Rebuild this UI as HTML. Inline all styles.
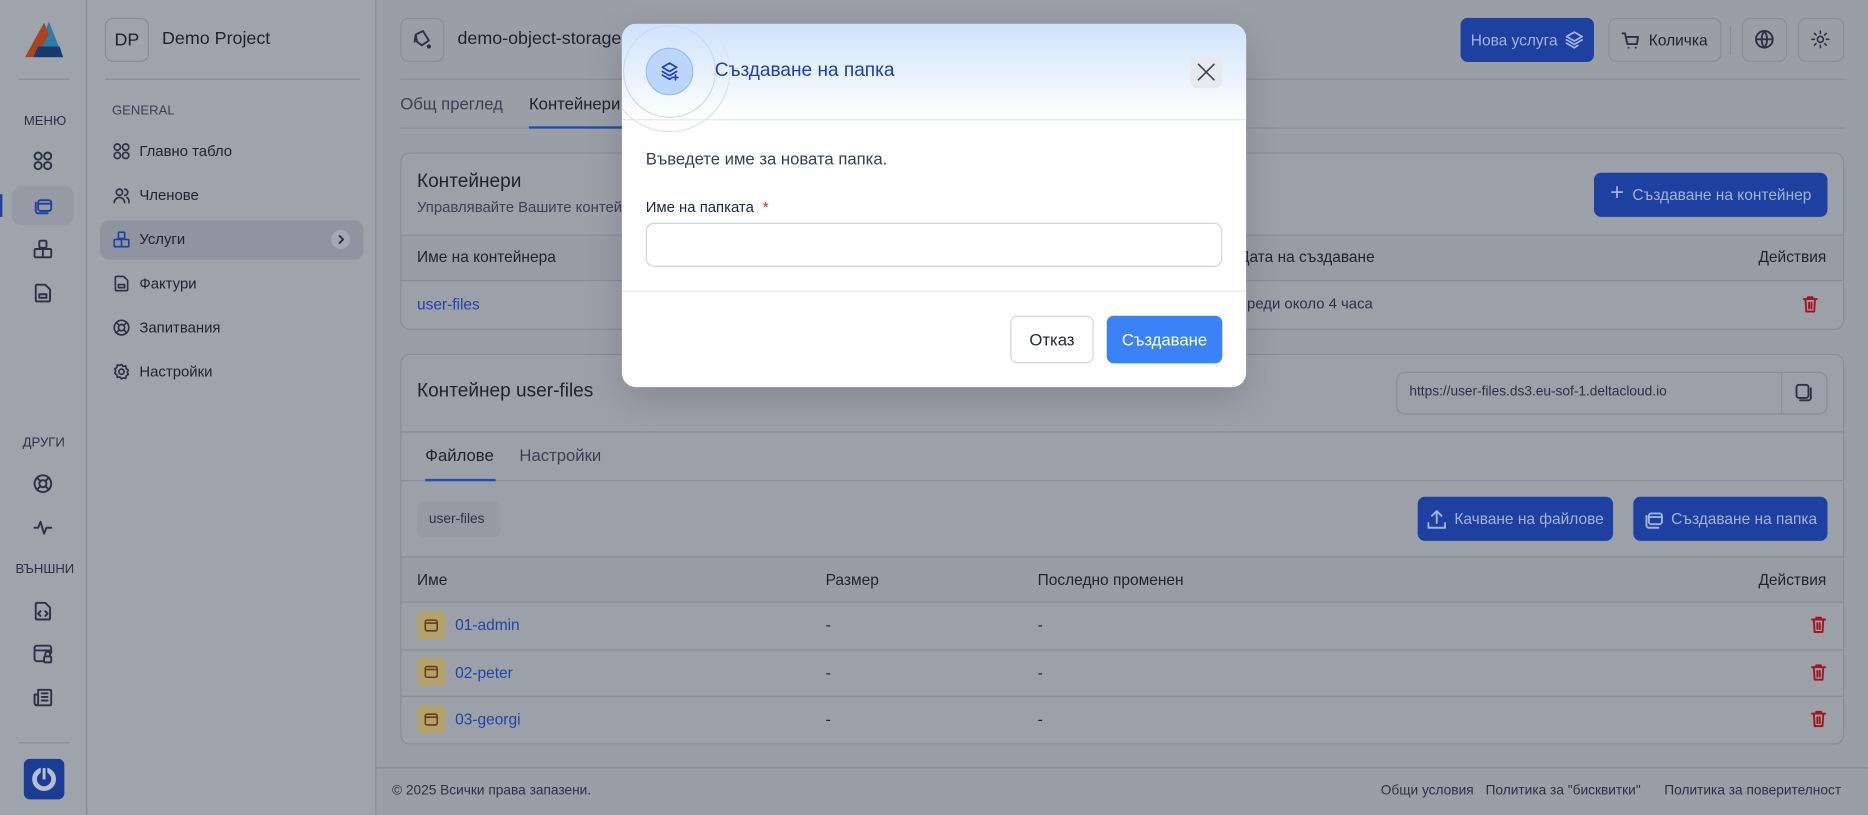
<!DOCTYPE html>
<html><head><meta charset="utf-8">
<style>
*{box-sizing:border-box;margin:0;padding:0}
html,body{width:1868px;height:815px;overflow:hidden;background:#9a9ea7}
#s{position:absolute;left:0;top:0;width:1568px;height:684px;transform:scale(1.19133);transform-origin:0 0;font-family:"Liberation Sans",sans-serif;color:#1d2330;background:#9a9ea7}
.a{position:absolute}
.t{position:absolute;white-space:nowrap;line-height:1}
.ic{position:absolute;fill:none;stroke:#2a3344;stroke-width:1.6;stroke-linecap:round;stroke-linejoin:round}
.card{position:absolute;border:1px solid #878d99;border-radius:8px;background:#9ca0a9}
.hl{position:absolute;height:1px;background:#878d99}
.btnb{position:absolute;background:#1e40a0;border-radius:6px;color:#a3b3d8;font-size:13px;display:flex;align-items:center;justify-content:center;gap:7px}
.ob{position:absolute;border:1px solid #878d99;border-radius:7px}
.trash{position:absolute;stroke:#a3151f}
</style></head><body><div id="s">
<!-- rail -->
<div class="a" style="left:0;top:0;width:73px;height:684px;background:#9fa3ac;border-right:1px solid #878d99"></div>
<svg class="a" style="left:20px;top:17px" width="34" height="33" viewBox="0 0 34 33"><polygon points="21,1 33,31 10,31" fill="#2a7fa8"/><polygon points="17,2 1,31 10,31 21,12" fill="#a54522"/><polygon points="12,22 30,22 33,31 8,31" fill="#17396b"/></svg>
<div class="hl" style="left:16px;top:66px;width:42px"></div>
<div class="t" style="left:20px;top:97px;font-size:11px;color:#2a3344">МЕНЮ</div>
<svg class="ic" style="left:28px;top:127px" width="16" height="16" viewBox="0 0 16 16"><circle cx="4" cy="4" r="3"/><circle cx="12" cy="4" r="3"/><circle cx="4" cy="12" r="3"/><circle cx="12" cy="12" r="3"/></svg>
<div class="a" style="left:10px;top:156px;width:52px;height:33px;background:#959aa5;border-radius:8px"></div>
<div class="a" style="left:0;top:163px;width:2px;height:19px;background:#1e40a0"></div>
<svg class="ic" style="left:28px;top:164px;stroke:#1e40a0" width="16" height="16" viewBox="0 0 16 16"><rect x="4" y="4" width="11" height="9" rx="2"/><path d="M2 6v7a2 2 0 0 0 2 2h8M4 7h11"/></svg>
<svg class="ic" style="left:28px;top:201px" width="16" height="16" viewBox="0 0 16 16"><rect x="5" y="1" width="6" height="6" rx="1"/><rect x="1" y="8" width="14" height="7" rx="1"/><path d="M8 8v7"/></svg>
<svg class="ic" style="left:29px;top:238px" width="14" height="16" viewBox="0 0 14 16"><path d="M2 1h7l4 4v9a1 1 0 0 1-1 1H2a1 1 0 0 1-1-1V2a1 1 0 0 1 1-1zM4 9h6v3H4z"/></svg>
<div class="t" style="left:19px;top:367px;font-size:11px;color:#2a3344">ДРУГИ</div>
<svg class="ic" style="left:28px;top:398px" width="16" height="16" viewBox="0 0 16 16"><circle cx="8" cy="8" r="7"/><circle cx="8" cy="8" r="3"/><path d="M3 3l3 3M13 3l-3 3M3 13l3-3M13 13l-3-3"/></svg>
<svg class="ic" style="left:28px;top:436px" width="16" height="14" viewBox="0 0 16 14"><path d="M1 7h3l2-5 3 10 2-5h4"/></svg>
<div class="t" style="left:13px;top:473px;font-size:11px;color:#2a3344">ВЪНШНИ</div>
<svg class="ic" style="left:29px;top:505px" width="14" height="16" viewBox="0 0 14 16"><path d="M2 1h7l4 4v9a1 1 0 0 1-1 1H2a1 1 0 0 1-1-1V2a1 1 0 0 1 1-1zM5 8l-2 2 2 2M9 8l2 2-2 2"/></svg>
<svg class="ic" style="left:28px;top:541px" width="16" height="16" viewBox="0 0 16 16"><path d="M8 14H3a2 2 0 0 1-2-2V3a2 2 0 0 1 2-2h10a2 2 0 0 1 2 2v4M1 5h14"/><rect x="9" y="10" width="6" height="5" rx="1"/><path d="M10 10V8a2 2 0 0 1 4 0v2"/></svg>
<svg class="ic" style="left:28px;top:577px" width="16" height="16" viewBox="0 0 16 16"><path d="M4 2h10a1 1 0 0 1 1 1v11a1 1 0 0 1-1 1H3a2 2 0 0 1-2-2V6h3zM4 2v11a2 2 0 0 1-2 2M7 5h5M7 8h5M7 11h5"/></svg>
<div class="hl" style="left:16px;top:623px;width:42px"></div>
<div class="a" style="left:20px;top:637px;width:34px;height:34px;background:#1a3c94;border-radius:5px"></div>
<svg class="a" style="left:25px;top:642px" width="24" height="24" viewBox="0 0 24 24"><circle cx="12" cy="12" r="8" fill="none" stroke="#b8bfcc" stroke-width="4"/><rect x="10" y="2" width="4" height="11" fill="#b8bfcc" stroke="#1a3c94" stroke-width="1.5"/></svg>
<!-- sidebar -->
<div class="a" style="left:74px;top:0;width:242px;height:684px;background:#9fa3ac;border-right:1px solid #878d99"></div>
<div class="ob" style="left:88px;top:15px;width:37px;height:37px;display:flex;align-items:center;justify-content:center;font-size:15px">DP</div>
<div class="t" style="left:136px;top:25px;font-size:15px;color:#1d2330">Demo Project</div>
<div class="hl" style="left:88px;top:66px;width:214px"></div>
<div class="t" style="left:94px;top:88px;font-size:11px;color:#3a4252">GENERAL</div>
<svg class="ic" style="left:95px;top:120px" width="14" height="14" viewBox="0 0 16 16"><circle cx="4" cy="4" r="3"/><circle cx="12" cy="4" r="3"/><circle cx="4" cy="12" r="3"/><circle cx="12" cy="12" r="3"/></svg>
<div class="t" style="left:117px;top:121px;font-size:12.5px">Главно табло</div>
<svg class="ic" style="left:95px;top:157px" width="14" height="14" viewBox="0 0 16 16"><circle cx="6" cy="5" r="3"/><path d="M1 15a5 5 0 0 1 10 0M11 2a3 3 0 0 1 0 6M13 10a4 4 0 0 1 2 5"/></svg>
<div class="t" style="left:117px;top:158px;font-size:12.5px">Членове</div>
<div class="a" style="left:84px;top:185px;width:221px;height:33px;background:#8e94a0;border-radius:8px"></div>
<svg class="ic" style="left:95px;top:194px;stroke:#1e40a0" width="14" height="14" viewBox="0 0 16 16"><rect x="5" y="1" width="6" height="6" rx="1"/><rect x="1" y="8" width="14" height="7" rx="1"/><path d="M8 8v7"/></svg>
<div class="t" style="left:117px;top:195px;font-size:12.5px">Услуги</div>
<div class="a" style="left:278px;top:193px;width:16px;height:16px;border-radius:8px;background:#a3a8b2"></div>
<svg class="ic" style="left:282px;top:197px" width="8" height="8" viewBox="0 0 8 8"><path d="M3 1l3 3-3 3"/></svg>
<svg class="ic" style="left:96px;top:231px" width="12" height="14" viewBox="0 0 14 16"><path d="M2 1h7l4 4v9a1 1 0 0 1-1 1H2a1 1 0 0 1-1-1V2a1 1 0 0 1 1-1zM4 9h6v3H4z"/></svg>
<div class="t" style="left:117px;top:232px;font-size:12.5px">Фактури</div>
<svg class="ic" style="left:95px;top:268px" width="14" height="14" viewBox="0 0 16 16"><circle cx="8" cy="8" r="7"/><circle cx="8" cy="8" r="3"/><path d="M3 3l3 3M13 3l-3 3M3 13l3-3M13 13l-3-3"/></svg>
<div class="t" style="left:117px;top:269px;font-size:12.5px">Запитвания</div>
<svg class="ic" style="left:95px;top:305px" width="14" height="14" viewBox="0 0 16 16"><circle cx="8" cy="8" r="2.5"/><path d="M8 1l1.5 2 2.5-.5.5 2.5 2 1.5-1 2 1 2-2 1.5-.5 2.5-2.5-.5L8 15l-1.5-2-2.5.5-.5-2.5-2-1.5 1-2-1-2 2-1.5.5-2.5 2.5.5z"/></svg>
<div class="t" style="left:117px;top:306px;font-size:12.5px">Настройки</div>
<!-- header -->
<div class="ob" style="left:336px;top:15px;width:37px;height:37px"></div>
<svg class="ic" style="left:345px;top:24px" width="18" height="18" viewBox="0 0 18 18"><path d="M4 5l6-3 5 8-6 4-4-3zM4 5l-1 6M15 14a1 1 0 1 0 .1 0"/></svg>
<div class="t" style="left:384px;top:25px;font-size:15px">demo-object-storage</div>
<div class="btnb" style="left:1226px;top:15px;width:112px;height:37px">Нова услуга <svg class="ic" style="position:static;stroke:#a3b3d8" width="15" height="15" viewBox="0 0 16 16"><path d="M8 1l7 4-7 4-7-4zM1 8l7 4 7-4M1 11l7 4 3-2"/></svg></div>
<div class="ob" style="left:1350px;top:15px;width:95px;height:37px"></div>
<svg class="ic" style="left:1361px;top:26px" width="16" height="16" viewBox="0 0 16 16"><path d="M1 2h2l2 9h8l1-6H5M6 14h.1M12 14h.1"/></svg>
<div class="t" style="left:1384px;top:27px;font-size:13px">Количка</div>
<div class="a" style="left:1452px;top:22px;width:1px;height:24px;background:#878d99"></div>
<div class="ob" style="left:1462px;top:15px;width:38px;height:37px"></div>
<svg class="ic" style="left:1473px;top:25px" width="16" height="16" viewBox="0 0 16 16"><circle cx="8" cy="8" r="7"/><path d="M1 8h14M8 1c-3 4-3 10 0 14M8 1c3 4 3 10 0 14"/></svg>
<div class="ob" style="left:1509px;top:15px;width:39px;height:37px"></div>
<svg class="ic" style="left:1520px;top:25px;stroke-width:1.3" width="16" height="16" viewBox="0 0 16 16"><circle cx="8" cy="8" r="2.5"/><path d="M8 1v2M8 13v2M1 8h2M13 8h2M3 3l1.4 1.4M11.6 11.6L13 13M3 13l1.4-1.4M11.6 4.4L13 3"/></svg>
<div class="hl" style="left:336px;top:66px;width:1212px"></div>
<div class="t" style="left:336px;top:80px;font-size:14px;color:#3a4252">Общ преглед</div>
<div class="t" style="left:444px;top:80px;font-size:14px">Контейнери</div>
<div class="hl" style="left:336px;top:107px;width:1212px"></div>
<div class="a" style="left:444px;top:106px;width:90px;height:2px;background:#1e50b0"></div>
<!-- card1 -->
<div class="card" style="left:336px;top:128px;width:1212px;height:149px"></div>
<div class="t" style="left:350px;top:145px;font-size:16px">Контейнери</div>
<div class="t" style="left:350px;top:168px;font-size:12.5px;color:#3a4252">Управлявайте Вашите контейнери</div>
<div class="btnb" style="left:1338px;top:145px;width:196px;height:37px"><span style="font-size:20px;font-weight:300;margin-top:-2px">+</span>Създаване на контейнер</div>
<div class="hl" style="left:337px;top:197px;width:1210px"></div>
<div class="a" style="left:337px;top:198px;width:1210px;height:37px;background:#989ca6"></div>
<div class="t" style="left:350px;top:209px;font-size:13px">Име на контейнера</div>
<div class="t" style="left:1040px;top:209px;font-size:13px">Дата на създаване</div>
<div class="t" style="right:35px;top:209px;font-size:13px">Действия</div>
<div class="hl" style="left:337px;top:235px;width:1210px"></div>
<div class="t" style="left:350px;top:249px;font-size:13px;color:#1e45a8">user-files</div>
<div class="t" style="left:1040px;top:249px;font-size:12.5px;color:#2a3344">преди около 4 часа</div>
<svg class="ic trash" style="left:1513px;top:248px" width="13" height="15" viewBox="0 0 13 15"><path d="M1 3h11M4.5 3V1.5h4V3M2.5 3l.7 10.5h6.6L10.5 3M5.5 6v5M7.5 6v5"/></svg>
<!-- card2 -->
<div class="card" style="left:336px;top:297px;width:1212px;height:328px"></div>
<div class="t" style="left:350px;top:321px;font-size:16px">Контейнер user-files</div>
<div class="ob" style="left:1172px;top:312px;width:362px;height:36px"></div>
<div class="a" style="left:1495px;top:313px;width:1px;height:34px;background:#878d99"></div>
<div class="t" style="left:1183px;top:324px;font-size:11.5px;color:#2a3344">https://user-files.ds3.eu-sof-1.deltacloud.io</div>
<svg class="ic" style="left:1507px;top:322px" width="14" height="15" viewBox="0 0 14 15"><rect x="1" y="1" width="10" height="11" rx="2"/><path d="M13 4v8a2 2 0 0 1-2 2H4"/></svg>
<div class="hl" style="left:337px;top:362px;width:1210px"></div>
<div class="t" style="left:357px;top:375px;font-size:14px">Файлове</div>
<div class="t" style="left:436px;top:375px;font-size:14px;color:#3a4252">Настройки</div>
<div class="hl" style="left:337px;top:403px;width:1210px"></div>
<div class="a" style="left:357px;top:402px;width:59px;height:2px;background:#1e50b0"></div>
<div class="a" style="left:350px;top:421px;width:70px;height:30px;border-radius:6px;background:#959aa4"></div>
<div class="t" style="left:360px;top:431px;font-size:11.5px;color:#2a3344">user-files</div>
<div class="btnb" style="left:1190px;top:417px;width:164px;height:37px"><svg class="ic" style="position:static;stroke:#a3b3d8" width="16" height="16" viewBox="0 0 16 16"><path d="M8 11V1M4 5l4-4 4 4M1 11v4h14v-4"/></svg>Качване на файлове</div>
<div class="btnb" style="left:1371px;top:417px;width:163px;height:37px"><svg class="ic" style="position:static;stroke:#a3b3d8" width="16" height="16" viewBox="0 0 16 16"><rect x="4" y="3" width="11" height="9" rx="2"/><path d="M2 5v8a2 2 0 0 0 2 2h8M4 6h11"/></svg>Създаване на папка</div>
<div class="hl" style="left:337px;top:467px;width:1210px"></div>
<div class="a" style="left:337px;top:468px;width:1210px;height:37px;background:#989ca6"></div>
<div class="t" style="left:350px;top:480px;font-size:13px">Име</div>
<div class="t" style="left:693px;top:480px;font-size:13px">Размер</div>
<div class="t" style="left:871px;top:480px;font-size:13px">Последно променен</div>
<div class="t" style="right:35px;top:480px;font-size:13px">Действия</div>
<div class="hl" style="left:337px;top:505px;width:1210px"></div>
<div class="hl" style="left:337px;top:545px;width:1210px"></div>
<div class="hl" style="left:337px;top:584px;width:1210px"></div>
<div class="a" style="left:350px;top:513px;width:24px;height:24px;border-radius:5px;background:#b2a36c"></div>
<div class="a" style="left:350px;top:552px;width:24px;height:24px;border-radius:5px;background:#b2a36c"></div>
<div class="a" style="left:350px;top:592px;width:24px;height:24px;border-radius:5px;background:#b2a36c"></div>
<svg class="ic" style="left:356px;top:519px;stroke:#6b3a12;stroke-width:1.3" width="12" height="12" viewBox="0 0 12 12"><rect x="1" y="1.5" width="10" height="9" rx="1.5"/><path d="M1 4h10"/></svg>
<svg class="ic" style="left:356px;top:558px;stroke:#6b3a12;stroke-width:1.3" width="12" height="12" viewBox="0 0 12 12"><rect x="1" y="1.5" width="10" height="9" rx="1.5"/><path d="M1 4h10"/></svg>
<svg class="ic" style="left:356px;top:598px;stroke:#6b3a12;stroke-width:1.3" width="12" height="12" viewBox="0 0 12 12"><rect x="1" y="1.5" width="10" height="9" rx="1.5"/><path d="M1 4h10"/></svg>
<div class="t" style="left:382px;top:518px;font-size:13px;color:#1e45a8">01-admin</div>
<div class="t" style="left:382px;top:558px;font-size:13px;color:#1e45a8">02-peter</div>
<div class="t" style="left:382px;top:597px;font-size:13px;color:#1e45a8">03-georgi</div>
<div class="t" style="left:693px;top:518px;font-size:13px">-</div><div class="t" style="left:871px;top:518px;font-size:13px">-</div>
<div class="t" style="left:693px;top:558px;font-size:13px">-</div><div class="t" style="left:871px;top:558px;font-size:13px">-</div>
<div class="t" style="left:693px;top:597px;font-size:13px">-</div><div class="t" style="left:871px;top:597px;font-size:13px">-</div>
<svg class="ic trash" style="left:1520px;top:517px" width="13" height="15" viewBox="0 0 13 15"><path d="M1 3h11M4.5 3V1.5h4V3M2.5 3l.7 10.5h6.6L10.5 3M5.5 6v5M7.5 6v5"/></svg>
<svg class="ic trash" style="left:1520px;top:557px" width="13" height="15" viewBox="0 0 13 15"><path d="M1 3h11M4.5 3V1.5h4V3M2.5 3l.7 10.5h6.6L10.5 3M5.5 6v5M7.5 6v5"/></svg>
<svg class="ic trash" style="left:1520px;top:596px" width="13" height="15" viewBox="0 0 13 15"><path d="M1 3h11M4.5 3V1.5h4V3M2.5 3l.7 10.5h6.6L10.5 3M5.5 6v5M7.5 6v5"/></svg>
<!-- footer -->
<div class="hl" style="left:316px;top:644px;width:1252px"></div>
<div class="t" style="left:329px;top:659px;font-size:11.5px;color:#2a3344">© 2025 Всички права запазени.</div>
<div class="t" style="left:1159px;top:659px;font-size:11.5px;color:#2a3344">Общи условия</div>
<div class="t" style="left:1247px;top:659px;font-size:11.5px;color:#2a3344">Политика за "бисквитки"</div>
<div class="t" style="left:1397px;top:659px;font-size:11.5px;color:#2a3344">Политика за поверителност</div>
<!-- modal -->
<div class="a" style="left:522px;top:20px;width:524px;height:305px;background:#fff;border-radius:12px;overflow:hidden;box-shadow:0 10px 30px rgba(0,0,0,.15)">
  <div class="a" style="left:0;top:0;width:524px;height:81px;background:linear-gradient(#cfe2fb,#ffffff);border-bottom:1px solid #e3e8ef"></div>
  <div class="a" style="left:-11px;top:-11px;width:102px;height:102px;border-radius:50%;border:1px solid #d6e4f8"></div>
  <div class="a" style="left:1px;top:1px;width:78px;height:78px;border-radius:50%;border:1px solid #c8dbf6"></div>
  <div class="a" style="left:20px;top:20px;width:40px;height:40px;border-radius:50%;background:#bcd6fb;border:1px solid #93bdf5"></div>
  <svg class="ic" style="left:32px;top:32px;stroke:#1e40af;stroke-width:1.4" width="16" height="16" viewBox="0 0 16 16"><path d="M8 1l6 3.5-6 3.5-6-3.5zM2 8l6 3.5 6-3.5M2 11l6 3.5 2-1.2M13 11v4M11 13h4"/></svg>
  <div class="t" style="left:78px;top:32px;font-size:16px;color:#1e40af">Създаване на папка</div>
  <div class="a" style="left:477px;top:27px;width:27px;height:27px;border-radius:6px;background:#e6eaef"></div>
  <svg class="ic" style="left:483px;top:33px;stroke:#374151;stroke-width:1.3" width="15" height="15" viewBox="0 0 15 15"><path d="M1 1l13 13M14 1L1 14"/></svg>
  <div class="t" style="left:20px;top:106px;font-size:14px;color:#374151">Въведете име за новата папка.</div>
  <div class="t" style="left:20px;top:148px;font-size:12.5px;color:#1f2937">Име на папката <span style="color:#dc2626;margin-left:4px">*</span></div>
  <div class="a" style="left:20px;top:167px;width:484px;height:37px;border:1px solid #cfd5dd;border-radius:7px"></div>
  <div class="a" style="left:0;top:224px;width:524px;height:1px;background:#e5e7eb"></div>
  <div class="a" style="left:326px;top:245px;width:70px;height:40px;border:1px solid #cfd5dd;border-radius:6px;display:flex;align-items:center;justify-content:center;font-size:14px;color:#1f2937">Отказ</div>
  <div class="a" style="left:407px;top:245px;width:97px;height:40px;background:#3b82f6;border-radius:6px;display:flex;align-items:center;justify-content:center;font-size:14px;color:#fff">Създаване</div>
</div>
</div></body></html>
